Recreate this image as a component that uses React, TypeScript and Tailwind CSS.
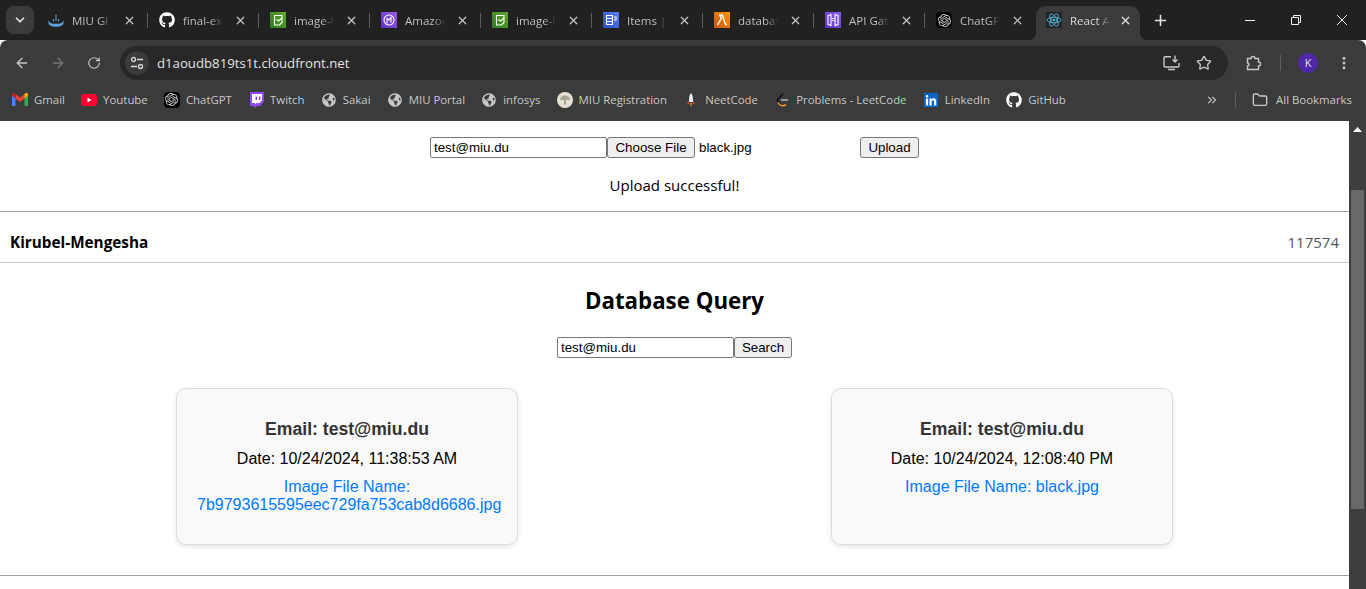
import { useId } from 'react'
import type { ReactNode } from 'react'
import { ArrowLeft, ArrowRight, ChevronDown, ChevronsRight, EllipsisVertical, Folder, Plus, RotateCw, Star, X } from 'lucide-react'
import { FaGithub, FaGlobeAmericas, FaLinkedinIn } from 'react-icons/fa'
import { SiOpenai } from 'react-icons/si'

function AwsIcon({ from, to, children }: { from: string; to: string; children: ReactNode }) {
  const id = useId()
  return (
    <svg width="16" height="16" viewBox="0 0 16 16" fill="none" stroke="#fff" strokeWidth="1.1" className="shrink-0">
      <defs>
        <linearGradient id={id} x1="0" y1="1" x2="1" y2="0">
          <stop offset="0" stopColor={from} />
          <stop offset="1" stopColor={to} />
        </linearGradient>
      </defs>
      <rect width="16" height="16" fill={`url(#${id})`} stroke="none" />
      {children}
    </svg>
  )
}

const s3 = (
  <AwsIcon from="#2f7a1c" to="#5ea82f">
    <path d="M4.500 3.500h7.500v7l-2.500 2.500h-5z" />
    <path d="M6.500 7.500l2 1.500 3.500-3" />
  </AwsIcon>
)

const reactIcon = (
  <svg width="16" height="16" viewBox="0 0 16 16" fill="none" stroke="#58c4dc" strokeWidth="0.8" className="shrink-0">
    <rect width="16" height="16" fill="#20232a" stroke="none" />
    <ellipse cx="8" cy="8" rx="7" ry="2.8" />
    <ellipse cx="8" cy="8" rx="7" ry="2.8" transform="rotate(60 8 8)" />
    <ellipse cx="8" cy="8" rx="7" ry="2.8" transform="rotate(120 8 8)" />
    <circle cx="8" cy="8" r="1.3" fill="#58c4dc" stroke="none" />
  </svg>
)

const openAi = (
  <span className="w-4 h-4 rounded-sm bg-black flex items-center justify-center shrink-0">
    <SiOpenai size={13} color="#d8d8d8" />
  </span>
)

const globe = <FaGlobeAmericas size={14} color="#c4c7c5" />

const tabs: { title: string; icon: ReactNode }[] = [
  {
    title: 'MIU Gl',
    icon: (
      <svg width="16" height="16" viewBox="0 0 16 16" fill="none" stroke="#5aa7e0" strokeWidth="1.3" className="shrink-0">
        <path d="M1 10.500c0 2.500 3 3.500 7 3.500s7-1 7-3.500c-1 1.500-3 2-7 2s-6-.5-7-2z" fill="#5aa7e0" />
        <path d="M5 7l1 2.500M8 2.500V9M11 7l-1 2.500" strokeWidth="1" />
      </svg>
    ),
  },
  { title: 'final-ex', icon: <FaGithub size={16} color="#fff" className="shrink-0" /> },
  { title: 'image-l', icon: s3 },
  {
    title: 'Amazon',
    icon: (
      <AwsIcon from="#5a30c0" to="#9a5ce8">
        <circle cx="8" cy="8" r="5" />
        <path d="M6 11.500V6.500l2 1.500 2-2.500v5" />
      </AwsIcon>
    ),
  },
  { title: 'image-l', icon: s3 },
  {
    title: 'Items | A',
    icon: (
      <AwsIcon from="#2e4ac8" to="#5f7cf0">
        <path d="M3.500 3.500h6v9h-6zM3.500 6.500h6M3.500 9.500h6" />
        <path d="M11 5h2v3h-2" />
      </AwsIcon>
    ),
  },
  {
    title: 'databas',
    icon: (
      <AwsIcon from="#c8511b" to="#ff9900">
        <path d="M3.500 13l3.800-6.500L5.800 3h2.500l3.200 9.500h1.500" strokeWidth="1.3" />
      </AwsIcon>
    ),
  },
  {
    title: 'API Gat',
    icon: (
      <AwsIcon from="#5a30c8" to="#8a5ce8">
        <path d="M3 3.500l3-1v11l-3-1zM13 3.500l-3-1v11l3-1z" />
        <path d="M7.500 6v4M8.800 6v4" strokeDasharray="1 1" />
      </AwsIcon>
    ),
  },
  { title: 'ChatGP', icon: openAi },
]

const bookmarks: { title: string; icon: ReactNode }[] = [
  {
    title: 'Gmail',
    icon: (
      <svg width="16" height="13" viewBox="0 0 16 13">
        <path d="M0 2.500V12a1 1 0 001 1h2.500V5.500z" fill="#4285f4" />
        <path d="M12.500 5.500V13H15a1 1 0 001-1V2.500z" fill="#34a853" />
        <path d="M3.500 5.500L8 9l4.500-3.500V1L8 4.500 3.500 1z" fill="#ea4335" />
        <path d="M0 2.500l3.500 3V1L2.300.1C1.200-.4 0 .5 0 1.800z" fill="#c5221f" />
        <path d="M16 2.500l-3.500 3V1l1.200-.9c1.100-.5 2.300.4 2.300 1.700z" fill="#fbbc04" />
      </svg>
    ),
  },
  {
    title: 'Youtube',
    icon: (
      <svg width="16" height="12" viewBox="0 0 16 12">
        <rect width="16" height="12" rx="3" fill="#ff0033" />
        <path d="M6.500 3.500v5L10.500 6z" fill="#fff" />
      </svg>
    ),
  },
  { title: 'ChatGPT', icon: openAi },
  {
    title: 'Twitch',
    icon: (
      <svg width="15" height="16" viewBox="0 0 15 16">
        <path d="M1 0h14v9.500L11 14H8l-3 2v-2H1z" fill="#9146ff" />
        <path d="M3 2h10v6.500L10.500 11H7.500L6 12.500V11H3z" fill="#fff" />
        <path d="M6.500 4.500h1.500v3.500H6.500zM10 4.500h1.500v3.500H10z" fill="#9146ff" />
      </svg>
    ),
  },
  { title: 'Sakai', icon: globe },
  { title: 'MIU Portal', icon: globe },
  { title: 'infosys', icon: globe },
  {
    title: 'MIU Registration',
    icon: (
      <svg width="16" height="16" viewBox="0 0 16 16">
        <circle cx="8" cy="8" r="8" fill="#e4e0d2" />
        <path d="M3 8a5 4.500 0 0110 0z" fill="#a8a494" />
        <path d="M7.300 8h1.400v4.500H7.300z" fill="#8a8676" />
      </svg>
    ),
  },
  {
    title: 'NeetCode',
    icon: (
      <svg width="16" height="16" viewBox="0 0 16 16">
        <path d="M8 1c2 2 2 5 2 9H6c0-4 0-7 2-9z" fill="#e8e8e8" />
        <path d="M6 9l-2 3h2zM10 9l2 3h-2z" fill="#d84a3a" />
        <path d="M7 11h2l-1 4z" fill="#f59e0b" />
      </svg>
    ),
  },
  {
    title: 'Problems - LeetCode',
    icon: (
      <svg width="16" height="16" viewBox="0 0 16 16" fill="none" strokeWidth="1.5">
        <path d="M9.500 1.500L3 8l4 5.500" stroke="#111" />
        <path d="M4 10.500c2 4 6 4 8 2" stroke="#f89f1b" />
        <path d="M7 8h7" stroke="#b3b3b3" />
      </svg>
    ),
  },
  {
    title: 'LinkedIn',
    icon: (
      <span className="w-[14px] h-[14px] bg-[#0a66c2] flex items-end justify-center">
        <FaLinkedinIn size={12} color="#fff" />
      </span>
    ),
  },
  { title: 'GitHub', icon: <FaGithub size={16} color="#fff" /> },
]

function Tab({ title, icon, last }: { title: string; icon: ReactNode; last: boolean }) {
  return (
    <div className="w-[111px] h-[40px] shrink-0 flex items-center pl-[11px] relative">
      {icon}
      <span className="ml-2 w-[40px] mt-px whitespace-nowrap text-[11.5px] bg-gradient-to-r from-[#c7c9c7] from-70% to-transparent bg-clip-text text-transparent">{title}</span>
      <X size={13} color="#c7c9c7" strokeWidth={2.2} className="ml-[11px] shrink-0" />
      {!last && <span className="absolute right-0 top-[13px] w-px h-[15px] bg-[#5a5c5a]" />}
    </div>
  )
}

function Card({ date, file }: { date: string; file: string }) {
  return (
    <div className="w-[342px] h-[157px] rounded-[10px] border border-[#dddddd] bg-[#f9f9f9] shadow-[0_2px_5px_rgba(0,0,0,0.1)] px-5 pt-[30px] text-center font-['Liberation_Sans',sans-serif]">
      <h3 className="text-[17.6px] leading-[21px] font-bold text-[#333333]">Email: test@miu.du</h3>
      <p className="mt-[10px] text-[16px] leading-[18px] text-black">Date: {date}</p>
      <p className="mt-[10px] text-[16px] leading-[18px] text-[#007bff]">Image File Name: {file}</p>
    </div>
  )
}

export default function App() {
  return (
    <div className="h-[589px] w-[1366px] overflow-hidden flex flex-col bg-white font-['Open_Sans',sans-serif]">
      <div className="h-[40px] bg-[#202120] flex items-center relative shrink-0">
        <div className="ml-[6px] w-7 h-7 rounded-lg bg-[#3b3b3b] flex items-center justify-center shrink-0">
          <ChevronDown size={14} color="#e6e6e6" strokeWidth={3} />
        </div>
        <div className="ml-[3px] flex">
          {tabs.map((t, i) => (
            <Tab key={i} title={t.title} icon={t.icon} last={i === tabs.length - 1} />
          ))}
          <div className="w-[104px] h-[34px] mt-[6px] pb-[6px] rounded-t-[10px] bg-[#3b3b3b] flex items-center pl-[10px] shrink-0 relative">
            <span className="absolute -left-2 bottom-0 w-2 h-2 bg-[radial-gradient(circle_at_0_0,transparent_8px,#3b3b3b_8.5px)]" />
            <span className="absolute -right-2 bottom-0 w-2 h-2 bg-[radial-gradient(circle_at_100%_0,transparent_8px,#3b3b3b_8.5px)]" />
            {reactIcon}
            <span className="ml-2 w-[40px] mt-px whitespace-nowrap text-[11.5px] bg-gradient-to-r from-[#e3e3e3] from-70% to-transparent bg-clip-text text-transparent">React A</span>
            <X size={13} color="#e3e3e3" strokeWidth={2.2} className="ml-[9px] shrink-0" />
          </div>
          <div className="ml-[12px] flex items-center">
            <Plus size={17} color="#e3e3e3" strokeWidth={2.2} />
          </div>
        </div>
        <div className="ml-auto flex items-center mr-[1px]">
          <div className="w-[46px] flex justify-center">
            <svg width="10" height="10" viewBox="0 0 10 10" stroke="#f0f0f0" fill="none"><path d="M0 5.500h10" /></svg>
          </div>
          <div className="w-[46px] flex justify-center">
            <svg width="10" height="10" viewBox="0 0 10 10" stroke="#f0f0f0" fill="none">
              <path d="M.5 2.500h7v7h-7z" />
              <path d="M2.500 2.500v-2h7v7h-2" />
            </svg>
          </div>
          <div className="w-[46px] flex justify-center">
            <svg width="10" height="10" viewBox="0 0 10 10" stroke="#f0f0f0" fill="none"><path d="M0 0l10 10M10 0L0 10" /></svg>
          </div>
        </div>
      </div>

      <div className="h-[40px] pt-[6px] bg-[#3b3b3b] flex items-center shrink-0 rounded-tl-[8px] rounded-tr-[8px]">
        <div className="w-[44px] flex justify-center"><ArrowLeft size={16} color="#c7c7c7" strokeWidth={2} /></div>
        <div className="w-[28px] flex justify-center"><ArrowRight size={16} color="#777777" strokeWidth={2} /></div>
        <div className="w-[44px] flex justify-center"><RotateCw size={14} color="#c7c7c7" strokeWidth={2} /></div>
        <div className="ml-[4px] w-[1108px] h-[34px] rounded-full bg-[#282828] flex items-center pl-[5px] pr-[16px]">
          <span className="w-6 h-6 rounded-full bg-[#3b3b3b] flex items-center justify-center">
            <svg width="14" height="14" viewBox="0 0 14 14" fill="none" stroke="#d8d8d8" strokeWidth="1.3">
              <circle cx="3.500" cy="3.500" r="2" />
              <path d="M7 3.500h6M1 10.500h6" />
              <circle cx="10.500" cy="10.500" r="2" />
            </svg>
          </span>
          <span className="ml-[8px] mt-px text-[13.2px] text-[#e3e3e3]">d1aoudb819ts1t.cloudfront.net</span>
          <svg width="17" height="16" viewBox="0 0 17 16" fill="none" stroke="#c7c7c7" strokeWidth="1.4" className="ml-auto">
            <path d="M8 1.700H2a1 1 0 00-1 1V11a1 1 0 001 1h13a1 1 0 001-1V8M5 14.500h7" />
            <path d="M12 .5v6M9.500 4.500L12 7l2.500-2.500" />
          </svg>
          <Star size={16} color="#c7c7c7" strokeWidth={2} className="ml-[16px]" />
        </div>
        <svg width="16" height="16" viewBox="0 0 16 16" fill="none" stroke="#c7c7c7" strokeWidth="1.4" className="ml-[18px]">
          <path d="M1.500 3.500h3.500a2 2 0 014 0h3.500v3.500a2 2 0 010 4v3.500h-11V11a1.500 1.500 0 000-3z" />
        </svg>
        <span className="ml-[18px] w-px h-[16px] bg-[#5f5f5f]" />
        <span className="ml-[17px] w-5 h-5 rounded-full bg-[#5029a8] text-[#e3e3e3] text-[11px] flex items-center justify-center">K</span>
        <EllipsisVertical size={16} color="#c7c7c7" strokeWidth={2.5} className="ml-[18px]" />
      </div>

      <div className="h-[41px] bg-[#3b3b3b] flex items-center pl-[12px] pb-px shrink-0 text-[11.4px] text-[#c7c9c7]">
        <div className="flex items-center gap-[16.2px]">
          {bookmarks.map((b) => (
            <div key={b.title} className="flex items-center gap-[6px] whitespace-nowrap">
              <span className="w-4 flex justify-center shrink-0">{b.icon}</span>
              {b.title}
            </div>
          ))}
        </div>
        <ChevronsRight size={14} color="#c7c7c7" className="ml-auto" />
        <span className="ml-[16px] w-px h-[16px] bg-[#5f5f5f]" />
        <Folder size={16} color="#c7c7c7" className="ml-[16px]" />
        <span className="ml-[8px] mr-[14px]">All Bookmarks</span>
      </div>

      <div className="flex-1 flex min-h-0">
        <main className="w-[1349px] shrink-0">
          <div className="pt-[16px] h-[90px] font-['Liberation_Sans',sans-serif] text-[13.33px] text-black">
            <div className="flex justify-center h-[21px]">
              <input readOnly value="test@miu.du" className="w-[177px] h-[21px] px-[3px] border border-[#767676] rounded-[2px] outline-none bg-white" />
              <div className="w-[253px] flex items-center">
                <button className="w-[88px] h-[21px] border border-[#767676] rounded-[3px] bg-[#efefef]">Choose File</button>
                <span className="ml-[4px]">black.jpg</span>
              </div>
              <button className="w-[59px] h-[21px] border border-[#767676] rounded-[3px] bg-[#efefef]">Upload</button>
            </div>
            <p className="mt-[16px] text-center text-[15px] leading-[22px] font-['Open_Sans',sans-serif]">Upload successful!</p>
          </div>
          <hr className="border-t border-[#a0a0a0]" />
          <div className="h-[51px] px-[10px] pt-[10px] flex items-center justify-between border-b border-[#cccccc]">
            <span className="text-[15.3px] font-bold text-black">Kirubel-Mengesha</span>
            <span className="text-[15px] text-[#555555]">117574</span>
          </div>
          <h2 className="mt-[21px] text-center text-[22.3px] leading-[34px] font-bold text-black">Database Query</h2>
          <div className="mt-[19px] flex justify-center font-['Liberation_Sans',sans-serif] text-[13.33px] text-black">
            <input readOnly value="test@miu.du" className="w-[177px] h-[21px] px-[3px] border border-[#767676] rounded-[2px] outline-none bg-white" />
            <button className="w-[58px] h-[21px] border border-[#767676] rounded-[3px] bg-[#efefef]">Search</button>
          </div>
          <div className="mt-[30px] flex justify-center gap-[313px]">
            <Card date="10/24/2024, 11:38:53 AM" file="7b9793615595eec729fa753cab8d6686.jpg" />
            <Card date="10/24/2024, 12:08:40 PM" file="black.jpg" />
          </div>
          <hr className="mt-[30px] border-t border-[#a0a0a0]" />
        </main>
        <div className="w-[17px] bg-[#3e3e3e] flex flex-col items-center">
          <svg width="9" height="5" viewBox="0 0 9 5" className="mt-[6px] shrink-0">
            <path d="M4.500 0L9 5H0z" fill="#ffffff" />
          </svg>
          <div className="mt-[58px] w-[13px] h-[319px] bg-[#686868]" />
        </div>
      </div>
    </div>
  )
}
